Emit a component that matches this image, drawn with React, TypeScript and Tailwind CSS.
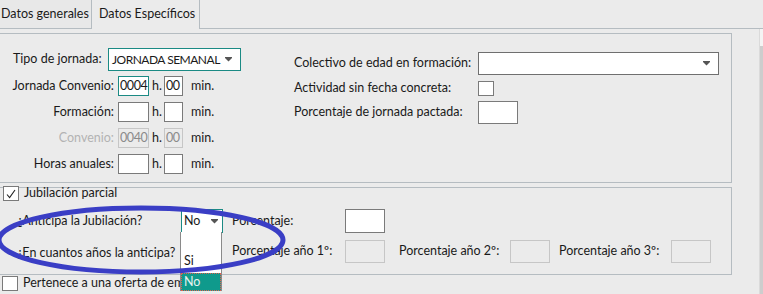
import React from "react";

const teal = "border-[#1b8a84]";

function Arrow() {
  return (
    <svg width="7" height="5" viewBox="0 0 7 5" className="shrink-0">
      <rect x="0" y="0" width="7" height="1" fill="#555" />
      <polygon points="0,1 7,1 3.5,4.5" fill="#555" />
    </svg>
  );
}

function Check({ checked }: { checked?: boolean }) {
  return (
    <div className="w-[16px] h-[15px] border border-[#7a7a7a] bg-white flex items-center justify-center shrink-0">
      {checked && (
        <svg width="12" height="12" viewBox="0 0 12 12">
          <path d="M2 6.5 L4.6 9.5 L10 2" fill="none" stroke="#222" strokeWidth="1.1" />
        </svg>
      )}
    </div>
  );
}

function Box({
  w,
  value,
  disabled,
  focus,
  h = "h-[20px]",
}: {
  w: string;
  value?: string;
  disabled?: boolean;
  focus?: boolean;
  h?: string;
}) {
  return (
    <div
      className={`${w} ${h} shrink-0 border flex items-center pl-[1px] leading-none tracking-[-0.4px] ${
        disabled
          ? "border-[#c6c6c6] bg-[#ebebeb] text-[#8a8a8a]"
          : focus
          ? `${teal} bg-white`
          : "border-[#7a7a7a] bg-white"
      }`}
    >
      {value}
    </div>
  );
}

function HoursRow({
  label,
  hours,
  mins,
  disabled,
  focus,
}: {
  label: string;
  hours?: string;
  mins?: string;
  disabled?: boolean;
  focus?: boolean;
}) {
  return (
    <div className="flex items-center h-[20px]">
      <span className={`w-[118px] text-right pr-[4px] ${disabled ? "text-[#b3b3b3]" : ""}`}>{label}</span>
      <Box w="w-[31px]" value={hours} disabled={disabled} focus={focus} />
      <span className="w-[15px] pl-[3px]">h.</span>
      <Box w="w-[19px]" value={mins} disabled={disabled} />
      <span className="ml-[8px]">min.</span>
    </div>
  );
}

export default function App() {
  return (
    <div
      className="relative w-[763px] h-[294px] overflow-hidden whitespace-nowrap bg-[#ebebeb] text-[#1a1a1a] text-[12.5px]"
      style={{ fontFamily: "Lato, 'Open Sans', sans-serif" }}
    >
      {/* tabs */}
      <div className="flex h-[29px]">
        <div className="w-[92px] border-r border-b border-[#b5bcc1] bg-[#e8e8e8] flex items-center pl-[1px]">
          Datos generales
        </div>
        <div className="w-[108px] border-r border-[#b5bcc1] flex items-center pl-[7px]">Datos Específicos</div>
        <div className="flex-1 border-b border-[#b5bcc1]" />
      </div>

      <div className="flex h-[265px]">
        <div className="w-[759px] pt-[4px]">
          {/* panel 1 */}
          <div className="ml-[-1px] w-[733px] h-[150px] border border-[#b5bcc1] flex">
            <div className="w-[294px] pt-[14px] flex flex-col">
              <div className="flex items-center h-[23px]">
                <span className="w-[108px] pl-[13px]">Tipo de jornada:</span>
                <div className={`w-[133px] h-[23px] border ${teal} bg-white flex items-center pl-[3px] pr-[8px] justify-between`}>
                  <span className="text-[12px] tracking-[-0.5px]">JORNADA SEMANAL</span>
                  <Arrow />
                </div>
              </div>
              <div className="flex flex-col gap-[6px] mt-[5px]">
                <HoursRow label="Jornada Convenio:" hours="0004" mins="00" focus />
                <HoursRow label="Formación:" />
                <HoursRow label="Convenio:" hours="0040" mins="00" disabled />
                <HoursRow label="Horas anuales:" />
              </div>
            </div>
            <div className="pt-[18px] flex flex-col gap-[5px]">
              <div className="flex items-center h-[23px]">
                <span className="w-[184px]">Colectivo de edad en formación:</span>
                <div className="w-[241px] h-[23px] border border-[#6f6f6f] bg-white flex items-center justify-end pr-[8px]">
                  <Arrow />
                </div>
              </div>
              <div className="flex items-center h-[16px]">
                <span className="w-[184px]">Actividad sin fecha concreta:</span>
                <Check />
              </div>
              <div className="flex items-center h-[23px]">
                <span className="w-[184px]">Porcentaje de jornada pactada:</span>
                <Box w="w-[40px]" h="h-[23px]" />
              </div>
            </div>
          </div>

          {/* panel 2 */}
          <div className="mt-[4px] ml-[-1px] w-[733px] h-[88px] border border-[#b5bcc1]">
            <div className="flex items-center gap-[5px] mt-[-2px] ml-[3px] h-[15px]">
              <Check checked />
              <span>Jubilación parcial</span>
            </div>
            <div className="flex items-center h-[24px] mt-[8px]">
              <span className="w-[181px] pl-[17px]">¿Anticipa la Jubilación?</span>
              <div className={`w-[42px] h-[24px] border ${teal} bg-white flex items-center justify-between pl-[2px] pr-[4px]`}>
                <span>No</span>
                <Arrow />
              </div>
              <span className="ml-[9px] w-[113px]">Porcentaje:</span>
              <Box w="w-[40px]" h="h-[24px]" />
            </div>
            <div className="flex items-center h-[23px] mt-[7px]">
              <span className="w-[181px] pl-[17px] pt-[3px]">¿En cuantos años la anticipa?</span>
              <span className="ml-[51px] w-[113px]">Porcentaje año 1º:</span>
              <Box w="w-[40px]" h="h-[23px]" disabled />
              <span className="ml-[14px] w-[111px]">Porcentaje año 2º:</span>
              <Box w="w-[40px]" h="h-[23px]" disabled />
              <span className="ml-[9px] w-[112px]">Porcentaje año 3º:</span>
              <Box w="w-[40px]" h="h-[23px]" disabled />
            </div>
          </div>

          <div className="flex items-center gap-[5px] ml-[2px] h-[16px]">
            <Check />
            <span className="w-[158px] overflow-hidden">Pertenece a una oferta de empleo</span>
          </div>
        </div>

        {/* scrollbar */}
        <div className="w-[4px] flex flex-col border-l border-[#dadada]">
          <div className="h-[17px] bg-[#f4f4f4]" />
          <div className="flex-1 bg-[#cdcdcd]" />
        </div>
      </div>

      {/* open dropdown list */}
      <div className="absolute left-[180px] top-[232px] w-[42px] h-[59px] bg-white border-x border-[#8a8a8a] flex flex-col justify-end">
        <div className="h-[23px] flex items-center pl-[3px]">Si</div>
        <div className="h-[18px] bg-[#0f9a8c] border border-dotted border-[#e0604f] flex items-center pl-[2px] text-[#e6f2f0]">
          No
        </div>
      </div>

      {/* hand-drawn annotation */}
      <svg className="absolute left-0 top-0 pointer-events-none" width="763" height="294">
        <ellipse cx="141" cy="240" rx="142" ry="32" fill="none" stroke="#3a3ec5" strokeWidth="5" />
      </svg>
    </div>
  );
}
